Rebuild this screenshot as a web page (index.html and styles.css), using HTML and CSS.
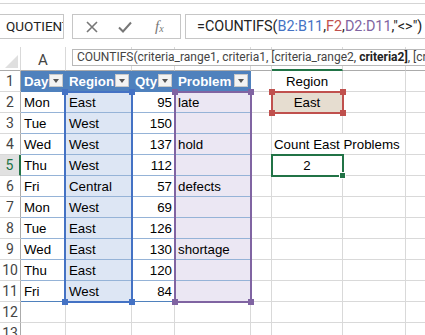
FILE: index.html
```html
<!DOCTYPE html>
<html lang="en">
<head>
  <meta charset="UTF-8" />
  <title>COUNTIFS - Sheet1</title>
  <link rel="stylesheet" href="styles.css">
</head>
<body>

  <div class="ribbon-edge"></div>

  <div class="formula-bar">
    <div class="name-box">QUOTIENT</div>
    <div class="fx-buttons">
      <svg class="btn-cancel" width="14" height="14" viewBox="0 0 14 14"><path d="M2 2 L12 12 M12 2 L2 12" stroke="#777" stroke-width="1.6" fill="none"/></svg>
      <svg class="btn-enter" width="16" height="14" viewBox="0 0 16 14"><path d="M2 7.5 L6 11.5 L14 2.5" stroke="#777" stroke-width="2" fill="none"/></svg>
      <span class="fx"><i>f</i><sub>x</sub></span>
    </div>
    <div class="formula-input">=COUNTIFS(<span class="ref-blue">B2:B11</span>,<span class="ref-red">F2</span>,<span class="ref-purple">D2:D11</span>,"&lt;&gt;")</div>
  </div>

  <div class="sheet">
    <table class="grid">
      <colgroup>
        <col class="c-rh"><col class="c-a"><col class="c-b"><col class="c-c"><col class="c-d"><col class="c-e"><col class="c-f"><col class="c-g"><col class="c-h">
      </colgroup>
      <tr class="col-heads">
        <td class="corner"><span class="corner-tri"></span></td>
        <td>A</td><td></td><td></td><td></td><td></td><td class="sel-col"></td><td></td><td></td>
      </tr>
      <tr>
        <td class="rh">1</td>
        <td class="th">Day<span class="drop"></span></td>
        <td class="th">Region<span class="drop"></span></td>
        <td class="th">Qty<span class="drop"></span></td>
        <td class="th th-last">Problem<span class="drop"></span></td>
        <td></td><td class="center">Region</td><td></td><td></td>
      </tr>
      <tr>
        <td class="rh">2</td>
        <td class="tb">Mon</td><td class="tb blue">East</td><td class="tb num">95</td><td class="tb purple">late</td>
        <td></td><td class="center crit">East</td><td></td><td></td>
      </tr>
      <tr>
        <td class="rh">3</td>
        <td class="tb">Tue</td><td class="tb blue">West</td><td class="tb num">150</td><td class="tb purple"></td>
        <td></td><td></td><td></td><td></td>
      </tr>
      <tr>
        <td class="rh">4</td>
        <td class="tb">Wed</td><td class="tb blue">West</td><td class="tb num">137</td><td class="tb purple">hold</td>
        <td></td><td class="spill">Count East Problems</td><td></td><td></td>
      </tr>
      <tr>
        <td class="rh rh-sel">5</td>
        <td class="tb">Thu</td><td class="tb blue">West</td><td class="tb num">112</td><td class="tb purple"></td>
        <td></td><td class="center">2</td><td></td><td></td>
      </tr>
      <tr>
        <td class="rh">6</td>
        <td class="tb">Fri</td><td class="tb blue">Central</td><td class="tb num">57</td><td class="tb purple">defects</td>
        <td></td><td></td><td></td><td></td>
      </tr>
      <tr>
        <td class="rh">7</td>
        <td class="tb">Mon</td><td class="tb blue">West</td><td class="tb num">69</td><td class="tb purple"></td>
        <td></td><td></td><td></td><td></td>
      </tr>
      <tr>
        <td class="rh">8</td>
        <td class="tb">Tue</td><td class="tb blue">East</td><td class="tb num">126</td><td class="tb purple"></td>
        <td></td><td></td><td></td><td></td>
      </tr>
      <tr>
        <td class="rh">9</td>
        <td class="tb">Wed</td><td class="tb blue">East</td><td class="tb num">130</td><td class="tb purple">shortage</td>
        <td></td><td></td><td></td><td></td>
      </tr>
      <tr>
        <td class="rh">10</td>
        <td class="tb">Thu</td><td class="tb blue">East</td><td class="tb num">120</td><td class="tb purple"></td>
        <td></td><td></td><td></td><td></td>
      </tr>
      <tr>
        <td class="rh">11</td>
        <td class="tb tb-last">Fri</td><td class="tb tb-last blue">West</td><td class="tb tb-last num">84</td><td class="tb tb-last purple"></td>
        <td></td><td></td><td></td><td></td>
      </tr>
      <tr>
        <td class="rh">12</td>
        <td></td><td></td><td></td><td></td><td></td><td></td><td></td><td></td>
      </tr>
      <tr>
        <td class="rh">13</td>
        <td></td><td></td><td></td><td></td><td></td><td></td><td></td><td></td>
      </tr>
    </table>

    <!-- range highlights drawn over the grid -->
    <div class="range range-blue">
      <span class="knob tl"></span><span class="knob tr"></span><span class="knob bl"></span><span class="knob br"></span>
    </div>
    <div class="range range-purple">
      <span class="knob tl"></span><span class="knob tr"></span><span class="knob bl"></span><span class="knob br"></span>
    </div>
    <div class="range range-red">
      <span class="knob tl"></span><span class="knob tr"></span><span class="knob bl"></span><span class="knob br"></span>
    </div>
    <div class="active-cell"><span class="fill-handle"></span></div>
  </div>

  <div class="tooltip">COUNTIFS(criteria_range1, criteria1, [criteria_range2, <b>criteria2]</b>, [criteria_range3, criteria3], ...)</div>

</body>
</html>
```

FILE: styles.css
```css
:root {
  --grid: #d9d9d9;
  --head: #4f81bd;
  --band: #95b3d7;
  --blue: #4472c4;
  --red: #c0504d;
  --purple: #8064a2;
  --green: #217346;
  --ui-text: #444;
}

body {
  margin: 0;
  width: 425px;
  height: 335px;
  overflow: hidden;
  background: #fff;
  font-family: "Liberation Sans", Arial, sans-serif;
  color: #000;
  position: relative;
}

.ribbon-edge {
  height: 3px;
  border-bottom: 1px solid #d5d5d5;
}

/* formula bar */

.formula-bar {
  display: flex;
  height: 25px;
  margin-top: 10px;
}

.name-box {
  width: 64px;
  box-sizing: border-box;
  border: 1px solid #c6c6c6;
  border-left: none;
  padding-left: 6px;
  font: 13.5px Roboto, sans-serif;
  line-height: 23px;
  color: #222;
  overflow: hidden;
  white-space: nowrap;
}

.fx-buttons {
  width: 109px;
  margin-left: 8px;
  box-sizing: border-box;
  border: 1px solid #c6c6c6;
  display: flex;
  align-items: center;
  padding-left: 12px;
}

.btn-enter {
  margin-left: 18px;
}

.fx {
  margin-left: 22px;
  font: italic 15px "Liberation Serif", serif;
  color: #777;
}

.fx sub {
  font-size: 10px;
  vertical-align: -1px;
}

.formula-input {
  flex: 1;
  margin-left: 4px;
  box-sizing: border-box;
  border: 1px solid #c6c6c6;
  border-right: none;
  padding-left: 11px;
  font: 14.4px Roboto, sans-serif;
  line-height: 23px;
  color: #222;
  white-space: nowrap;
  overflow: hidden;
}

.ref-blue { color: var(--blue); }
.ref-red { color: var(--red); }
.ref-purple { color: var(--purple); }

/* tooltip */

.tooltip {
  position: absolute;
  top: 49px;
  left: 72px;
  height: 17px;
  box-sizing: border-box;
  padding: 0 4px;
  border: 1px solid #b9b9b9;
  background: #fff;
  font: 12px Roboto, sans-serif;
  line-height: 15px;
  color: var(--ui-text);
  white-space: nowrap;
}

.tooltip b {
  color: #222;
}

/* sheet grid */

.sheet {
  position: relative;
  margin-top: 8px;
}

.grid {
  border-spacing: 0;
  table-layout: fixed;
  width: 446px;
}

.c-rh { width: 21px; }
.c-a { width: 45px; }
.c-b { width: 66px; }
.c-c { width: 43px; }
.c-d { width: 76px; }
.c-e { width: 21px; }
.c-f { width: 71px; }
.c-g { width: 63px; }
.c-h { width: 40px; }

.grid tr {
  height: 21px;
}

.grid td {
  box-sizing: border-box;
  border-right: 1px solid var(--grid);
  border-bottom: 1px solid var(--grid);
  padding: 0 3px;
  font-size: 13.3px;
  white-space: nowrap;
  overflow: hidden;
}

.grid .col-heads {
  height: 24px;
}

.col-heads td {
  text-align: center;
  font: 15px Roboto, sans-serif;
  color: var(--ui-text);
  border-bottom-color: #ababab;
  padding-top: 2px;
}

.col-heads .corner {
  position: relative;
}

.corner-tri {
  position: absolute;
  right: 2px;
  bottom: 2px;
  width: 0;
  height: 0;
  border-left: 13px solid transparent;
  border-bottom: 13px solid #dfdfdf;
}

.col-heads .sel-col {
  border-bottom: 2px solid var(--green);
}

.grid .rh {
  text-align: center;
  padding: 0;
  font: 14px Roboto, sans-serif;
  color: var(--ui-text);
  border-right-color: #ababab;
}

.grid .rh-sel {
  background: #e1e1e1;
  color: var(--green);
  border-right: 2px solid var(--green);
}

/* table */

.grid .th {
  position: relative;
  background: var(--head);
  color: #fff;
  font-weight: bold;
  border-right-color: var(--head);
  border-bottom-color: var(--head);
}

.drop {
  position: absolute;
  right: 2px;
  top: 3px;
  width: 14px;
  height: 13px;
  box-sizing: border-box;
  background: #f3f3f3;
  border: 1px solid #c8c8c8;
}

.drop::after {
  content: "";
  position: absolute;
  left: 3px;
  top: 4px;
  border-left: 3.5px solid transparent;
  border-right: 3.5px solid transparent;
  border-top: 4px solid #555;
}

.grid .tb {
  border-bottom-color: var(--band);
  border-right-color: transparent;
}

.grid .tb-last {
  border-bottom-color: var(--head);
}

.grid .blue { background: #dde6f4; }
.grid .purple { background: #ebe7f3; }
.grid .num { text-align: right; padding-right: 2px; }

.grid .center { text-align: center; }
.grid .crit { background: #e6ddd0; }

.grid .spill {
  overflow: visible;
  border-right-color: transparent;
  padding-left: 2px;
}

/* reference highlights */

.range {
  position: absolute;
  box-sizing: border-box;
  border: 2px solid;
}

.range-blue {
  left: 64px;
  top: 44px;
  width: 69px;
  height: 212px;
  border-color: var(--blue);
}

.range-purple {
  left: 174px;
  top: 44px;
  width: 78px;
  height: 212px;
  border-color: var(--purple);
}

.range-red {
  left: 271px;
  top: 44px;
  width: 73px;
  height: 23px;
  border-color: var(--red);
}

.knob {
  position: absolute;
  width: 6px;
  height: 6px;
}

.range-blue .knob { background: var(--blue); }
.range-purple .knob { background: var(--purple); }
.range-red .knob { background: var(--red); }

.knob.tl { left: -4px; top: -4px; }
.knob.tr { right: -4px; top: -4px; }
.knob.bl { left: -4px; bottom: -4px; }
.knob.br { right: -4px; bottom: -4px; }

.active-cell {
  position: absolute;
  left: 271px;
  top: 107px;
  width: 73px;
  height: 23px;
  box-sizing: border-box;
  border: 2px solid var(--green);
}

.fill-handle {
  position: absolute;
  right: -4px;
  bottom: -4px;
  width: 5px;
  height: 5px;
  background: var(--green);
  border: 1px solid #fff;
}
```
